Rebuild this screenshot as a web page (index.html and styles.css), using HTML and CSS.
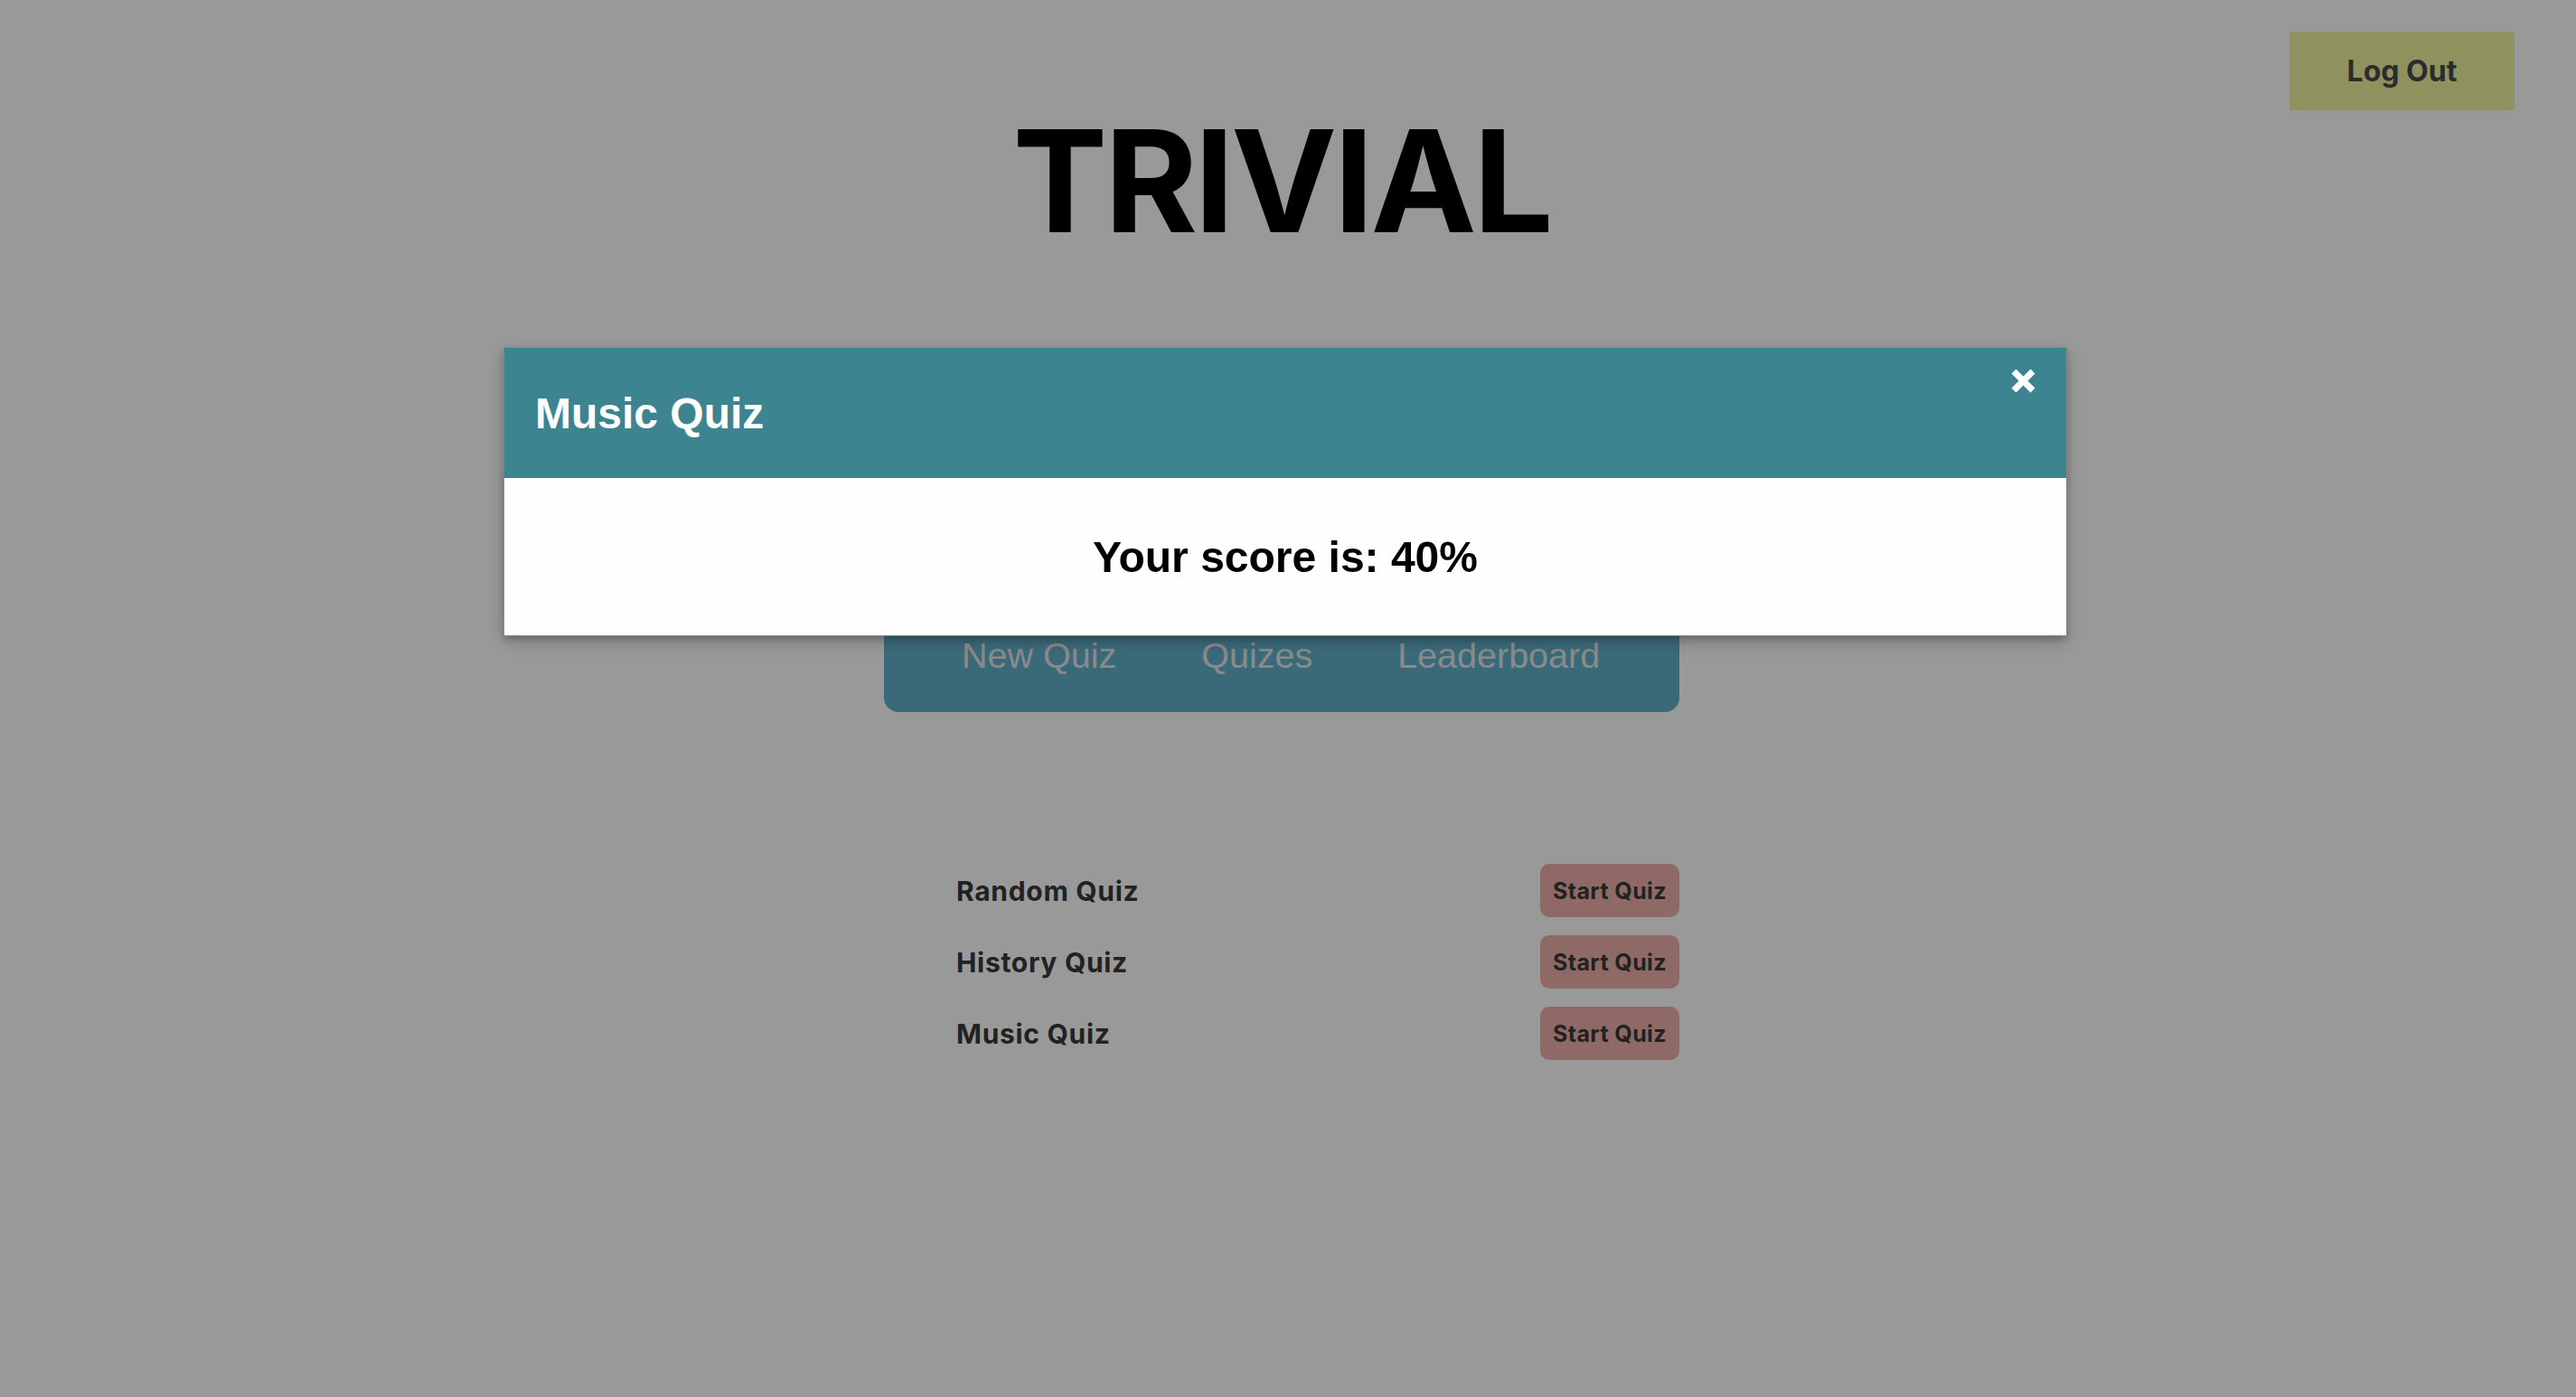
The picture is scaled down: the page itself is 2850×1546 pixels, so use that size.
FILE: index.html
```html
<!DOCTYPE html>
<html lang="en">
<head>
<meta charset="utf-8">
<title>Trivial</title>
<link rel="stylesheet" href="styles.css">
</head>
<body>
<header class="topbar">
  <button class="logout">Log Out</button>
</header>
<h1 class="title">TRIVIAL</h1>
<main class="column">
  <nav class="tabs">
    <a class="tab">New Quiz</a>
    <a class="tab">Quizes</a>
    <a class="tab">Leaderboard</a>
  </nav>
  <ul class="quiz-list">
    <li class="quiz-row"><span class="quiz-name">Random Quiz</span><button class="start">Start Quiz</button></li>
    <li class="quiz-row"><span class="quiz-name">History Quiz</span><button class="start">Start Quiz</button></li>
    <li class="quiz-row"><span class="quiz-name">Music Quiz</span><button class="start">Start Quiz</button></li>
  </ul>
</main>
<div class="backdrop">
  <div class="modal">
    <div class="modal-head">
      <h2 class="modal-title">Music Quiz</h2>
      <span class="close" aria-label="close">
        <svg width="27" height="27" viewBox="0 0 27 27"><path d="M3 3 L24 24 M24 3 L3 24" stroke="#fff" stroke-width="7" stroke-linecap="butt" fill="none"/></svg>
      </span>
    </div>
    <div class="modal-body">
      <p class="score">Your score is: 40%</p>
    </div>
  </div>
</div>
</body>
</html>
```
FILE: styles.css
```css
html, body {
  margin: 0;
  padding: 0;
}
body {
  background: #ffffff;
  font-family: Inter, "Noto Sans", sans-serif;
  min-height: 1546px;
}
.topbar {
  display: flex;
  justify-content: flex-end;
  padding: 35px 68px 0 0;
}
.logout {
  width: 249px;
  height: 87px;
  border: none;
  border-radius: 3px;
  background: #eef29d;
  color: #4a4a4a;
  font-family: Inter, sans-serif;
  font-weight: 700;
  font-size: 32px;
  padding: 0;
}
.title {
  margin: 0;
  padding-right: 14px;
  text-align: center;
  font-family: Inter, sans-serif;
  font-weight: 700;
  font-size: 157px;
  line-height: 157px;
  color: #000;
  letter-spacing: -3.5px;
}
.column {
  width: 880px;
  margin: 0 auto;
  padding-right: 14px;
}
.tabs {
  margin-top: 380px;
  display: flex;
  gap: 94px;
  padding: 44px 0 40px 86px;
  background: #62b1cb;
  border-radius: 0 0 16px 16px;
  white-space: nowrap;
}
.tab {
  flex: none;
  font-family: "Liberation Sans", Arial, sans-serif;
  font-size: 39.5px;
  line-height: 45px;
  color: #e6e6e6;
}
.quiz-list {
  list-style: none;
  margin: 168px 0 0 0;
  padding: 0 0 0 80px;
  display: flex;
  flex-direction: column;
  gap: 20px;
}
.quiz-row {
  display: flex;
  justify-content: space-between;
  align-items: center;
  height: 59px;
}
.quiz-name {
  font-size: 30px;
  font-weight: 700;
  letter-spacing: 0.7px;
  color: #3a3a3a;
}
.start {
  height: 59px;
  padding: 0 14px;
  border: none;
  border-radius: 10px;
  background: #edafa8;
  color: #3a3a3a;
  font-family: Inter, sans-serif;
  font-weight: 700;
  font-size: 25px;
  letter-spacing: 0.4px;
}
.backdrop {
  position: fixed;
  inset: 0;
  background: rgba(0, 0, 0, 0.4);
}
.modal {
  width: 1728px;
  margin: 384px 0 0 557px;
  background: #fefefe;
  border: 1px solid #888;
  box-shadow: 0 4px 8px 0 rgba(0,0,0,0.2), 0 6px 20px 0 rgba(0,0,0,0.19);
  font-family: "Liberation Sans", Arial, sans-serif;
}
.modal-head {
  position: relative;
  height: 144px;
  background: #3c8590;
  display: flex;
  align-items: center;
  padding: 0 34px;
}
.modal-title {
  margin: 0;
  color: #fff;
  font-size: 48px;
  font-weight: 700;
}
.close {
  position: absolute;
  top: 23px;
  right: 34px;
  width: 27px;
  height: 27px;
  display: block;
}
.close svg {
  display: block;
}
.modal-body {
  height: 174px;
  display: flex;
  align-items: center;
  justify-content: center;
}
.score {
  margin: 0;
  font-size: 48px;
  font-weight: 700;
  color: #000;
}
```
